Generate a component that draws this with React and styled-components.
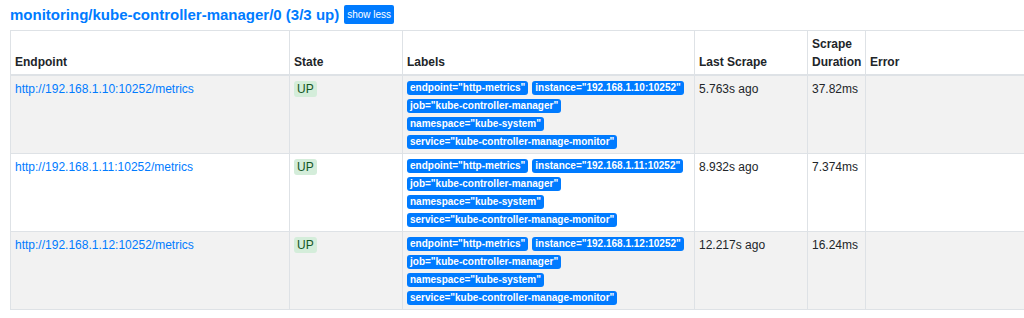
import React from "react";
import styled, { createGlobalStyle } from "styled-components";

const Global = createGlobalStyle`
  html, body { margin: 0; padding: 0; overflow: hidden; background: #fff; }
  body { font-family: "Liberation Sans", Arial, sans-serif; color: #212529; }
`;

const Page = styled.div`
  padding: 4px 0 0 10px;
  overflow: hidden;
`;

const TitleRow = styled.div`
  display: flex;
  align-items: center;
  gap: 5px;
  height: 21px;
  margin-bottom: 5px;
`;

const Title = styled.a`
  font-size: 15px;
  font-weight: bold;
  color: #007bff;
  text-decoration: none;
`;

const ShowButton = styled.button`
  background: #007bff;
  color: #fff;
  border: none;
  border-radius: 2px;
  font-family: inherit;
  font-size: 10px;
  padding: 0 3px;
  height: 19px;
  cursor: pointer;
`;

const Table = styled.table`
  border-collapse: collapse;
  width: 1100px;
  table-layout: fixed;
  font-size: 12px;
`;

const Th = styled.th`
  text-align: left;
  vertical-align: bottom;
  font-weight: bold;
  font-size: 12px;
  line-height: 18px;
  padding: 4px 4px 3px;
  border: 1px solid #dee2e6;
  border-bottom: 2px solid #dee2e6;
  width: ${(p) => p.w}px;
`;

const Tr = styled.tr`
  background: ${(p) => (p.striped ? "#f2f2f2" : "#fff")};
`;

const Td = styled.td`
  vertical-align: top;
  padding: 5px 4px 4px;
  border: 1px solid #dee2e6;
  line-height: 16px;
  height: 68px;
`;

const Link = styled.a`
  color: #007bff;
  text-decoration: none;
`;

const StateBadge = styled.span`
  display: inline-block;
  background: #d4edda;
  color: #155724;
  border-radius: 3px;
  padding: 0 3px;
  font-size: 12px;
  line-height: 16px;
`;

const LabelList = styled.div`
  display: flex;
  flex-wrap: wrap;
  gap: 4px 4px;
`;

const LabelBadge = styled.span`
  display: inline-block;
  background: #007bff;
  color: #fff;
  font-weight: bold;
  font-size: 10px;
  line-height: 14px;
  padding: 0 3px;
  border-radius: 3px;
  white-space: nowrap;
`;

const rows = [
  { ip: "192.168.1.10", last: "5.763s ago", dur: "37.82ms" },
  { ip: "192.168.1.11", last: "8.932s ago", dur: "7.374ms" },
  { ip: "192.168.1.12", last: "12.217s ago", dur: "16.24ms" },
];

export default function App() {
  return (
    <Page>
      <Global />
      <TitleRow>
        <Title href="#">monitoring/kube-controller-manager/0 (3/3 up)</Title>
        <ShowButton>show less</ShowButton>
      </TitleRow>
      <Table>
        <thead>
          <tr>
            <Th w={270}>Endpoint</Th>
            <Th w={104}>State</Th>
            <Th w={283}>Labels</Th>
            <Th w={104}>Last Scrape</Th>
            <Th w={49}>Scrape Duration</Th>
            <Th>Error</Th>
          </tr>
        </thead>
        <tbody>
          {rows.map((r, i) => (
            <Tr key={r.ip} striped={i % 2 === 0}>
              <Td>
                <Link href="#">http://{r.ip}:10252/metrics</Link>
              </Td>
              <Td>
                <StateBadge>UP</StateBadge>
              </Td>
              <Td>
                <LabelList>
                  <LabelBadge>endpoint="http-metrics"</LabelBadge>
                  <LabelBadge>instance="{r.ip}:10252"</LabelBadge>
                  <LabelBadge>job="kube-controller-manager"</LabelBadge>
                  <LabelBadge>namespace="kube-system"</LabelBadge>
                  <LabelBadge>service="kube-controller-manage-monitor"</LabelBadge>
                </LabelList>
              </Td>
              <Td>{r.last}</Td>
              <Td>{r.dur}</Td>
              <Td></Td>
            </Tr>
          ))}
        </tbody>
      </Table>
    </Page>
  );
}
